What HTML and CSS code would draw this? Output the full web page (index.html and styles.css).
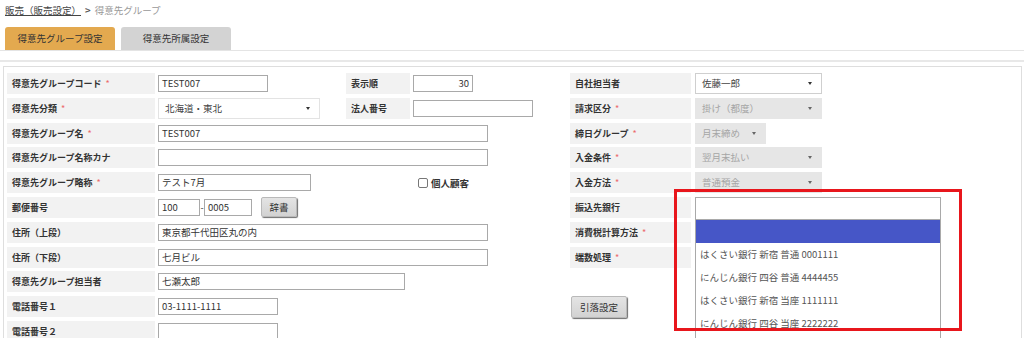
FILE: index.html
```html
<!DOCTYPE html>
<html lang="ja">
<head>
<meta charset="utf-8">
<title>得意先グループ</title>
<link rel="stylesheet" href="styles.css">
</head>
<body>
<div class="crumb"><a class="crumb-link">販売（販売設定）</a><span class="crumb-sep">&gt;</span><span class="crumb-cur">得意先グループ</span></div>
<div class="tabs">
  <div class="tab tab-on">得意先グループ設定</div>
  <div class="tab">得意先所属設定</div>
</div>
<div class="rule"></div>
<div class="panel">
  <div class="form">
    <!-- row 1 -->
    <div class="lbl">得意先グループコード<span class="req">*</span></div>
    <div class="ctl"><span class="inp w110">TEST007</span></div>
    <div class="lbl">表示順</div>
    <div class="ctl"><span class="inp w60 num">30</span></div>
    <div class="lbl">自社担当者</div>
    <div class="ctl"><span class="sel sel-white w127">佐藤一郎<i class="caret"></i></span></div>
    <!-- row 2 -->
    <div class="lbl">得意先分類<span class="req">*</span></div>
    <div class="ctl"><span class="sel sel-light w162">北海道・東北<i class="caret"></i></span></div>
    <div class="lbl">法人番号</div>
    <div class="ctl"><span class="inp w120"></span></div>
    <div class="lbl">請求区分<span class="req">*</span></div>
    <div class="ctl"><span class="sel sel-off w127">掛け（都度）<i class="caret"></i></span></div>
    <!-- row 3 -->
    <div class="lbl">得意先グループ名<span class="req">*</span></div>
    <div class="ctl span3"><span class="inp w330">TEST007</span></div>
    <div class="lbl">締日グループ<span class="req">*</span></div>
    <div class="ctl"><span class="sel sel-off w71">月末締め<i class="caret"></i></span></div>
    <!-- row 4 -->
    <div class="lbl">得意先グループ名称カナ</div>
    <div class="ctl span3"><span class="inp w330"></span></div>
    <div class="lbl">入金条件<span class="req">*</span></div>
    <div class="ctl"><span class="sel sel-off w127">翌月末払い<i class="caret"></i></span></div>
    <!-- row 5 -->
    <div class="lbl">得意先グループ略称<span class="req">*</span></div>
    <div class="ctl"><span class="inp w153">テスト7月</span></div>
    <div class="blank"></div>
    <div class="ctl"><label class="chk"><span class="box"></span>個人顧客</label></div>
    <div class="lbl">入金方法<span class="req">*</span></div>
    <div class="ctl"><span class="sel sel-off w127">普通預金<i class="caret"></i></span></div>
    <!-- row 6 -->
    <div class="lbl">郵便番号</div>
    <div class="ctl zip"><span class="inp w42">100</span><span class="dash">-</span><span class="inp w48">0005</span><span class="btn btn-dict">辞書</span></div>
    <div class="blank"></div>
    <div class="blank"></div>
    <div class="lbl">振込先銀行</div>
    <div class="ctl combo-cell">
      <div class="combo">
        <div class="combo-input"></div>
        <ul class="combo-list">
          <li class="opt opt-on"></li>
          <li class="opt">はくさい銀行 新宿 普通 0001111</li>
          <li class="opt">にんじん銀行 四谷 普通 4444455</li>
          <li class="opt">はくさい銀行 新宿 当座 1111111</li>
          <li class="opt">にんじん銀行 四谷 当座 2222222</li>
        </ul>
        <div class="mark"></div>
      </div>
    </div>
    <!-- row 7 -->
    <div class="lbl">住所（上段）</div>
    <div class="ctl span3"><span class="inp w330">東京都千代田区丸の内</span></div>
    <div class="lbl">消費税計算方法<span class="req">*</span></div>
    <div class="blank"></div>
    <!-- row 8 -->
    <div class="lbl">住所（下段）</div>
    <div class="ctl span3"><span class="inp w330">七月ビル</span></div>
    <div class="lbl">端数処理<span class="req">*</span></div>
    <div class="blank"></div>
    <!-- row 9 -->
    <div class="lbl">得意先グループ担当者</div>
    <div class="ctl span3"><span class="inp w247">七瀬太郎</span></div>
    <div class="blank"></div>
    <div class="blank"></div>
    <!-- row 10 -->
    <div class="lbl">電話番号１</div>
    <div class="ctl"><span class="inp w120">03-1111-1111</span></div>
    <div class="blank"></div>
    <div class="blank"></div>
    <div class="ctl btn-cell"><span class="btn btn-draw">引落設定</span></div>
    <div class="blank"></div>
    <!-- row 11 -->
    <div class="lbl">電話番号２</div>
    <div class="ctl"><span class="inp w120"></span></div>
  </div>
</div>
</body>
</html>
```
FILE: styles.css
```css
* { box-sizing: border-box; }
html, body { margin: 0; padding: 0; background: #fff; overflow: hidden; }
body {
  width: 1024px;
  height: 338px;
  font-family: "Noto Sans CJK JP", "Noto Sans", sans-serif;
  font-size: 9px;
  color: #333;
}
.crumb {
  height: 20px;
  padding: 3px 0 0 5px;
  line-height: 14px;
  font-size: 9.5px;
  color: #444;
}
.crumb-link { text-decoration: underline; color: #444; }
.crumb-sep { margin: 0 4px; color: #555; font-weight: bold; }
.crumb-cur { color: #999; }
.tabs {
  display: flex;
  gap: 6px;
  padding: 7px 0 0 5px;
  border-bottom: 1px solid #e4e4e4;
}
.tab {
  width: 110px;
  height: 23px;
  line-height: 23px;
  text-align: center;
  background: #d3d3d3;
  border-radius: 3px 3px 0 0;
  color: #333;
  font-size: 9.5px;
}
.tab-on { background: #e3a94f; }
.rule {
  height: 2px;
  margin-top: 9px;
  background: #e8e8e8;
}
.panel {
  margin: 4px 2px 0 3px;
  border: 1px solid #dedede;
  border-bottom: none;
  padding: 6px 0 0 3px;
  height: 272px;
  overflow: hidden;
}
.form {
  display: grid;
  grid-template-columns: 148px 185px 64px 154px 121px 1fr;
  grid-auto-rows: 21px;
  column-gap: 3px;
  row-gap: 3.8px;
}
.lbl {
  background: #f2f2f2;
  font-weight: bold;
  padding-left: 5px;
  line-height: 21px;
  color: #333;
  white-space: nowrap;
}
.req { color: #ec6a6a; margin-left: 4px; font-weight: normal; }
.ctl { display: flex; align-items: center; }
.span3 { grid-column: span 3; }
.inp {
  display: block;
  height: 17px;
  border: 1px solid #a9a9a9;
  background: #fff;
  padding: 0 3px;
  line-height: 15px;
  font-size: 9.5px;
  color: #333;
  white-space: nowrap;
}
.num { text-align: right; }
.w42 { width: 42px; }
.w48 { width: 48px; }
.w60 { width: 60px; }
.w110 { width: 110px; }
.w120 { width: 120px; }
.w153 { width: 153px; }
.w247 { width: 247px; }
.w330 { width: 330px; }
.w71 { width: 71px; }
.w127 { width: 127px; }
.w162 { width: 162px; }
.sel {
  position: relative;
  display: block;
  height: 21px;
  line-height: 19px;
  padding-left: 6px;
  font-size: 9.5px;
  color: #444;
}
.sel-white { border: 1px solid #cfcfcf; background: #fff; margin-left: 1px; }
.sel-light { border: 1px solid #e3e3e3; background: #fff; }
.sel-off { background: #e6e6e6; color: #a5a5a5; border: 1px solid #e6e6e6; margin-left: 1px; }
.caret {
  position: absolute;
  right: 9px;
  top: 8px;
  width: 0;
  height: 0;
  border-left: 2.5px solid transparent;
  border-right: 2.5px solid transparent;
  border-top: 3px solid #333;
}
.sel-off .caret { border-top-color: #666; }
.chk {
  display: flex;
  align-items: center;
  margin-left: 5px;
  font-weight: bold;
  font-size: 9.5px;
}
.box {
  width: 10px;
  height: 10px;
  border: 1px solid #777;
  border-radius: 2px;
  margin-right: 3px;
  background: #fff;
}
.zip .dash { width: 4px; text-align: center; font-size: 9px; }
.btn {
  display: inline-block;
  text-align: center;
  background: linear-gradient(#e4e4e4, #d2d2d2);
  border: 1px solid #b9b9b9;
  border-radius: 2px;
  box-shadow: 1px 1px 1px #6e6e6e;
  color: #333;
  font-size: 9.5px;
}
.btn-dict { width: 36px; height: 20px; line-height: 18px; margin-left: 9px; }
.btn-cell { padding-left: 1px; }
.btn-draw { width: 56px; height: 22px; line-height: 20px; }
.combo-cell { align-items: flex-start; }
.combo { position: relative; width: 246px; margin-left: 1px; }
.combo-input {
  height: 23px;
  border: 1px solid #a9a9a9;
  background: #fff;
}
.combo-list {
  position: absolute;
  left: 0;
  top: 23px;
  width: 246px;
  height: 118px;
  margin: 0;
  padding: 0;
  list-style: none;
  background: #fff;
  border: 1px solid #a9a9a9;
  border-top: none;
  border-bottom: none;
  overflow: hidden;
  z-index: 2;
}
.opt {
  height: 23px;
  line-height: 23px;
  padding-left: 4px;
  color: #555;
  font-size: 9.5px;
  white-space: nowrap;
}
.opt-on { background: #4656c7; }
.mark {
  position: absolute;
  left: -21px;
  top: -8px;
  width: 288px;
  height: 142px;
  border: 3px solid #e8161c;
  z-index: 3;
}
```
